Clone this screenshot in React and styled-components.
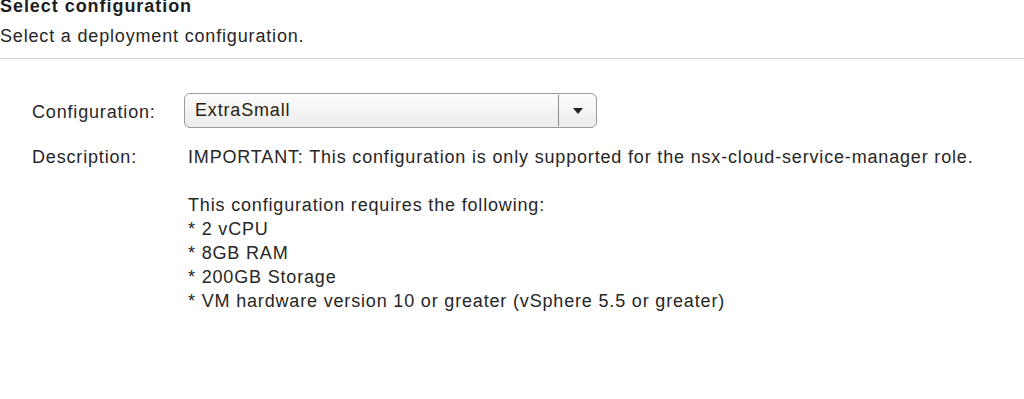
import React from 'react';
import styled, { createGlobalStyle } from 'styled-components';

const GlobalStyle = createGlobalStyle`
  html, body {
    margin: 0;
    padding: 0;
    background: #fff;
  }
  body {
    font-family: "Liberation Sans", Arial, sans-serif;
    font-size: 18px;
    letter-spacing: 0.83px;
    color: #262626;
  }
`;

const Page = styled.div`
  width: 1024px;
  height: 399px;
  overflow: hidden;
  background: #fff;
`;

const Header = styled.div`
  margin-top: -4px;
  padding-bottom: 12px;
  border-bottom: 1px solid #d2d2d2;
`;

const Title = styled.div`
  font-weight: bold;
  line-height: 20px;
  letter-spacing: 0.95px;
  color: #1e1e1e;
`;

const Subtitle = styled.div`
  margin-top: 10px;
  line-height: 20px;
`;

const Form = styled.div`
  padding: 34px 0 0 32px;
  display: grid;
  grid-template-columns: 152px 1fr;
  row-gap: 17px;
  align-items: center;
`;

const Label = styled.div`
  line-height: 24px;
  align-self: ${p => (p.$top ? 'start' : 'center')};
  padding-top: ${p => (p.$top ? '0' : '3px')};
`;

const Select = styled.div`
  width: 413px;
  height: 35px;
  box-sizing: border-box;
  border: 1px solid #9a9a9a;
  border-radius: 6px;
  background: linear-gradient(#fdfdfd, #ebebeb);
  display: flex;
  align-items: stretch;
`;

const SelectValue = styled.div`
  flex: 1;
  padding-left: 10px;
  display: flex;
  align-items: center;
  color: #2b1d0e;
`;

const SelectButton = styled.div`
  width: 37px;
  border-left: 1px solid #8a8a8a;
  margin: 1px 0;
  display: flex;
  align-items: center;
  justify-content: center;
`;

const Arrow = styled.div`
  width: 0;
  height: 0;
  border-left: 5px solid transparent;
  border-right: 5px solid transparent;
  border-top: 6px solid #222;
`;

const Description = styled.div`
  padding-left: 4px;
  line-height: 24px;
`;

const Line = styled.div`
  min-height: 24px;
`;

const lines = [
  'IMPORTANT: This configuration is only supported for the nsx-cloud-service-manager role.',
  '',
  'This configuration requires the following:',
  '* 2 vCPU',
  '* 8GB RAM',
  '* 200GB Storage',
  '* VM hardware version 10 or greater (vSphere 5.5 or greater)',
];

export default function App() {
  return (
    <>
      <GlobalStyle />
      <Page>
        <Header>
          <Title>Select configuration</Title>
          <Subtitle>Select a deployment configuration.</Subtitle>
        </Header>
        <Form>
          <Label>Configuration:</Label>
          <Select>
            <SelectValue>ExtraSmall</SelectValue>
            <SelectButton>
              <Arrow />
            </SelectButton>
          </Select>
          <Label $top>Description:</Label>
          <Description>
            {lines.map((l, i) => (
              <Line key={i}>{l}</Line>
            ))}
          </Description>
        </Form>
      </Page>
    </>
  );
}
